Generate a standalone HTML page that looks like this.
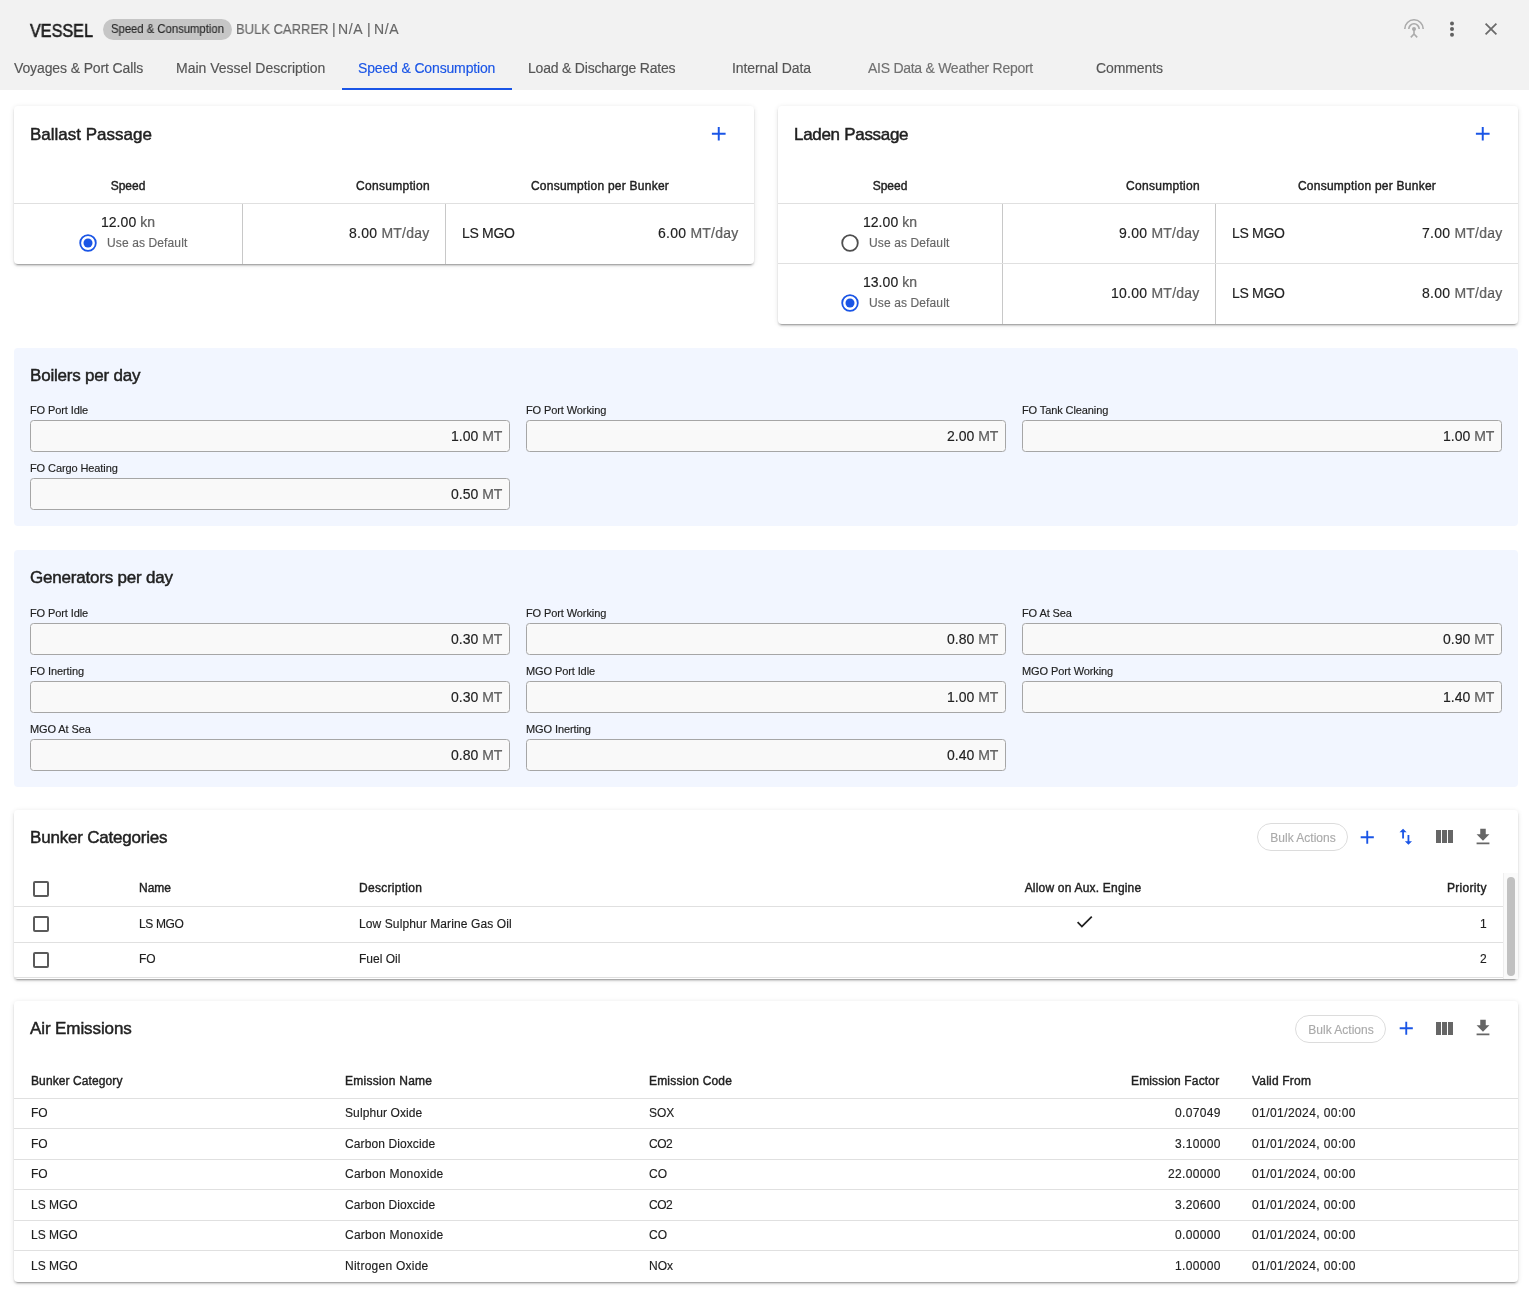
<!DOCTYPE html>
<html><head><meta charset="utf-8">
<style>
*{box-sizing:border-box;margin:0;padding:0}
html,body{width:1529px;height:1313px;overflow:hidden;background:#fff;font-family:"Liberation Sans",sans-serif;color:#212121}
.a{position:absolute;white-space:nowrap}
body>div.a{will-change:transform}
svg.a{display:block}
</style></head><body>
<div class="a" style="left:0px;top:0px;width:1529px;height:90px;background:#f2f2f2"></div>
<div class="a" style="top:21.09px;font-size:18.5px;line-height:20px;color:#1c1c1c;-webkit-text-stroke:0.6px #1c1c1c;left:30px;transform:scaleX(0.875);transform-origin:0 0;">VESSEL</div>
<div class="a" style="left:103px;top:19px;width:129px;height:21px;border-radius:11px;background:#c6c6c6"></div>
<div class="a" style="top:19.14px;font-size:12px;line-height:20px;color:#2a2a2a;-webkit-text-stroke:0.15px #2a2a2a;left:110.8px;transform:scaleX(0.94);transform-origin:0 0;">Speed &amp; Consumption</div>
<div class="a" style="top:19.25px;font-size:14px;line-height:20px;color:#666666;-webkit-text-stroke:0.15px #666666;left:331.8px;">|</div>
<div class="a" style="top:19.25px;font-size:14px;line-height:20px;color:#666666;letter-spacing:0.6px;-webkit-text-stroke:0.15px #666666;left:338.3px;">N/A</div>
<div class="a" style="top:19.25px;font-size:14px;line-height:20px;color:#666666;-webkit-text-stroke:0.15px #666666;left:366.9px;">|</div>
<div class="a" style="top:19.25px;font-size:14px;line-height:20px;color:#666666;letter-spacing:0.6px;-webkit-text-stroke:0.15px #666666;left:373.9px;">N/A</div>
<div class="a" style="top:19.25px;font-size:14px;line-height:20px;color:#666666;-webkit-text-stroke:0.15px #666666;left:236.4px;transform:scaleX(0.928);transform-origin:0 0;">BULK CARRER</div>
<svg class="a" style="left:1400px;top:14px" width="28" height="26" viewBox="0 0 28 26">
<path d="M4.8 15 A9.2 9.2 0 0 1 23.2 15" fill="none" stroke="#ababab" stroke-width="1.6"/>
<path d="M8.8 15 A5.2 5.2 0 0 1 19.2 15" fill="none" stroke="#ababab" stroke-width="1.6"/>
<circle cx="14" cy="15" r="2" fill="#ababab"/>
<path d="M14 16 V21 M14 20 L10.8 23.4 M14 20 L17.2 23.4" stroke="#ababab" stroke-width="1.6" fill="none"/>
</svg>
<svg class="a" style="left:1449px;top:21px" width="6" height="16" viewBox="0 0 6 16">
<circle cx="3" cy="2.5" r="2" fill="#616161"/><circle cx="3" cy="8" r="2" fill="#616161"/><circle cx="3" cy="13.7" r="2" fill="#616161"/></svg>
<svg class="a" style="left:1484px;top:22px" width="14" height="14" viewBox="0 0 14 14">
<path d="M1.6 1.6 L12.4 12.4 M12.4 1.6 L1.6 12.4" stroke="#6b6b6b" stroke-width="1.8"/></svg>
<div class="a" style="top:58.05px;font-size:14px;line-height:20px;color:#555555;letter-spacing:-0.12px;-webkit-text-stroke:0.15px #555555;left:14px;">Voyages &amp; Port Calls</div>
<div class="a" style="top:58.05px;font-size:14px;line-height:20px;color:#555555;-webkit-text-stroke:0.15px #555555;left:176px;">Main Vessel Description</div>
<div class="a" style="top:58.05px;font-size:14px;line-height:20px;color:#1a55e6;letter-spacing:-0.15px;-webkit-text-stroke:0.15px #1a55e6;left:358px;">Speed &amp; Consumption</div>
<div class="a" style="top:58.05px;font-size:14px;line-height:20px;color:#555555;letter-spacing:-0.2px;-webkit-text-stroke:0.15px #555555;left:528px;">Load &amp; Discharge Rates</div>
<div class="a" style="top:58.05px;font-size:14px;line-height:20px;color:#555555;letter-spacing:-0.1px;-webkit-text-stroke:0.15px #555555;left:732px;">Internal Data</div>
<div class="a" style="top:58.05px;font-size:14px;line-height:20px;color:#707070;letter-spacing:-0.27px;-webkit-text-stroke:0.15px #707070;left:868px;">AIS Data &amp; Weather Report</div>
<div class="a" style="top:58.05px;font-size:14px;line-height:20px;color:#555555;letter-spacing:-0.1px;-webkit-text-stroke:0.15px #555555;left:1096px;">Comments</div>
<div class="a" style="left:342px;top:88px;width:170px;height:2px;background:#1a55e6"></div>
<div class="a" style="left:14px;top:106px;width:740px;height:158px;box-shadow:0 3px 1px -2px rgba(0,0,0,.2),0 2px 2px 0 rgba(0,0,0,.14),0 1px 5px 0 rgba(0,0,0,.12);border-radius:4px;background:#fff;"></div>
<div class="a" style="top:125.21px;font-size:17px;line-height:20px;color:#212121;-webkit-text-stroke:0.45px #212121;left:30px;">Ballast Passage</div>
<svg class="a" style="left:707.25px;top:122.25px" width="23.5" height="23.5" viewBox="0 0 24 24"><path d="M19 13h-6v6h-2v-6H5v-2h6V5h2v6h6v2z" fill="#1a55e6"/></svg>
<div class="a" style="top:175.74px;font-size:12px;line-height:20px;color:#212121;-webkit-text-stroke:0.4px #212121;left:-272.0px;width:800px;text-align:center;">Speed</div>
<div class="a" style="top:175.74px;font-size:12px;line-height:20px;color:#212121;letter-spacing:0.3px;-webkit-text-stroke:0.4px #212121;right:1098.5px;">Consumption</div>
<div class="a" style="top:175.74px;font-size:12px;line-height:20px;color:#212121;letter-spacing:0.25px;-webkit-text-stroke:0.4px #212121;left:199.5px;width:800px;text-align:center;">Consumption per Bunker</div>
<div class="a" style="left:14px;top:203px;width:740px;height:1px;background:#e0e0e0"></div>
<div class="a" style="left:242px;top:204px;width:1px;height:60px;background:#c8c8c8"></div>
<div class="a" style="left:445px;top:204px;width:1px;height:60px;background:#c8c8c8"></div>
<div class="a" style="top:212.25px;font-size:14px;line-height:20px;color:#212121;letter-spacing:0.05px;-webkit-text-stroke:0.15px #212121;left:-272.5px;width:800px;text-align:center;">12.00 <span style="color:#666666">kn</span></div>
<svg class="a" style="left:77.7px;top:233.1px" width="20" height="20" viewBox="0 0 20 20"><circle cx="10" cy="10" r="7.8" fill="none" stroke="#1a55e6" stroke-width="1.8"/><circle cx="10" cy="10" r="4.5" fill="#1a55e6"/></svg>
<div class="a" style="top:232.94px;font-size:12px;line-height:20px;color:#666666;letter-spacing:0.12px;-webkit-text-stroke:0.15px #666666;left:107.4px;">Use as Default</div>
<div class="a" style="top:223.15px;font-size:14px;line-height:20px;color:#212121;letter-spacing:0.25px;-webkit-text-stroke:0.15px #212121;right:1099.5px;">8.00 <span style="color:#666666">MT/day</span></div>
<div class="a" style="top:223.15px;font-size:14px;line-height:20px;color:#212121;letter-spacing:-0.3px;-webkit-text-stroke:0.15px #212121;left:462px;">LS MGO</div>
<div class="a" style="top:223.15px;font-size:14px;line-height:20px;color:#212121;letter-spacing:0.25px;-webkit-text-stroke:0.15px #212121;right:790px;">6.00 <span style="color:#666666">MT/day</span></div>
<div class="a" style="left:778px;top:106px;width:740px;height:218px;box-shadow:0 3px 1px -2px rgba(0,0,0,.2),0 2px 2px 0 rgba(0,0,0,.14),0 1px 5px 0 rgba(0,0,0,.12);border-radius:4px;background:#fff;"></div>
<div class="a" style="top:125.21px;font-size:17px;line-height:20px;color:#212121;letter-spacing:-0.3px;-webkit-text-stroke:0.45px #212121;left:794px;">Laden Passage</div>
<svg class="a" style="left:1471.25px;top:122.25px" width="23.5" height="23.5" viewBox="0 0 24 24"><path d="M19 13h-6v6h-2v-6H5v-2h6V5h2v6h6v2z" fill="#1a55e6"/></svg>
<div class="a" style="top:175.74px;font-size:12px;line-height:20px;color:#212121;-webkit-text-stroke:0.4px #212121;left:490.0px;width:800px;text-align:center;">Speed</div>
<div class="a" style="top:175.74px;font-size:12px;line-height:20px;color:#212121;letter-spacing:0.3px;-webkit-text-stroke:0.4px #212121;right:328.5px;">Consumption</div>
<div class="a" style="top:175.74px;font-size:12px;line-height:20px;color:#212121;letter-spacing:0.25px;-webkit-text-stroke:0.4px #212121;left:966.5px;width:800px;text-align:center;">Consumption per Bunker</div>
<div class="a" style="left:778px;top:203px;width:740px;height:1px;background:#e0e0e0"></div>
<div class="a" style="left:1002px;top:204px;width:1px;height:60px;background:#c8c8c8"></div>
<div class="a" style="left:1215px;top:204px;width:1px;height:60px;background:#c8c8c8"></div>
<div class="a" style="top:212.25px;font-size:14px;line-height:20px;color:#212121;letter-spacing:0.05px;-webkit-text-stroke:0.15px #212121;left:489.5px;width:800px;text-align:center;">12.00 <span style="color:#666666">kn</span></div>
<svg class="a" style="left:839.7px;top:233.1px" width="20" height="20" viewBox="0 0 20 20"><circle cx="10" cy="10" r="7.8" fill="none" stroke="#4e4e4e" stroke-width="1.8"/></svg>
<div class="a" style="top:232.94px;font-size:12px;line-height:20px;color:#666666;letter-spacing:0.12px;-webkit-text-stroke:0.15px #666666;left:869.4px;">Use as Default</div>
<div class="a" style="top:223.15px;font-size:14px;line-height:20px;color:#212121;letter-spacing:0.25px;-webkit-text-stroke:0.15px #212121;right:329.5px;">9.00 <span style="color:#666666">MT/day</span></div>
<div class="a" style="top:223.15px;font-size:14px;line-height:20px;color:#212121;letter-spacing:-0.3px;-webkit-text-stroke:0.15px #212121;left:1232px;">LS MGO</div>
<div class="a" style="top:223.15px;font-size:14px;line-height:20px;color:#212121;letter-spacing:0.25px;-webkit-text-stroke:0.15px #212121;right:26px;">7.00 <span style="color:#666666">MT/day</span></div>
<div class="a" style="left:778px;top:263px;width:740px;height:1px;background:#e0e0e0"></div>
<div class="a" style="left:1002px;top:264px;width:1px;height:60px;background:#c8c8c8"></div>
<div class="a" style="left:1215px;top:264px;width:1px;height:60px;background:#c8c8c8"></div>
<div class="a" style="top:272.25px;font-size:14px;line-height:20px;color:#212121;letter-spacing:0.05px;-webkit-text-stroke:0.15px #212121;left:489.5px;width:800px;text-align:center;">13.00 <span style="color:#666666">kn</span></div>
<svg class="a" style="left:839.7px;top:293.1px" width="20" height="20" viewBox="0 0 20 20"><circle cx="10" cy="10" r="7.8" fill="none" stroke="#1a55e6" stroke-width="1.8"/><circle cx="10" cy="10" r="4.5" fill="#1a55e6"/></svg>
<div class="a" style="top:292.94px;font-size:12px;line-height:20px;color:#666666;letter-spacing:0.12px;-webkit-text-stroke:0.15px #666666;left:869.4px;">Use as Default</div>
<div class="a" style="top:283.15px;font-size:14px;line-height:20px;color:#212121;letter-spacing:0.25px;-webkit-text-stroke:0.15px #212121;right:329.5px;">10.00 <span style="color:#666666">MT/day</span></div>
<div class="a" style="top:283.15px;font-size:14px;line-height:20px;color:#212121;letter-spacing:-0.3px;-webkit-text-stroke:0.15px #212121;left:1232px;">LS MGO</div>
<div class="a" style="top:283.15px;font-size:14px;line-height:20px;color:#212121;letter-spacing:0.25px;-webkit-text-stroke:0.15px #212121;right:26px;">8.00 <span style="color:#666666">MT/day</span></div>
<div class="a" style="left:14px;top:348px;width:1504px;height:178px;background:#f2f6ff;border-radius:4px"></div>
<div class="a" style="top:365.91px;font-size:17px;line-height:20px;color:#212121;letter-spacing:-0.2px;-webkit-text-stroke:0.45px #212121;left:30px;">Boilers per day</div>
<div class="a" style="top:399.69px;font-size:11px;line-height:20px;color:#212121;letter-spacing:-0.1px;-webkit-text-stroke:0.15px #212121;left:30px;">FO Port Idle</div>
<div class="a" style="left:30px;top:420px;width:480px;height:32px;border:1px solid #a6a6a6;border-radius:3.5px;background:#f9f9f9;box-sizing:border-box"></div>
<div class="a" style="top:425.85px;font-size:14px;line-height:20px;color:#212121;-webkit-text-stroke:0.15px #212121;right:1027px;">1.00 <span style="color:#666666">MT</span></div>
<div class="a" style="top:399.69px;font-size:11px;line-height:20px;color:#212121;letter-spacing:-0.1px;-webkit-text-stroke:0.15px #212121;left:526px;">FO Port Working</div>
<div class="a" style="left:526px;top:420px;width:480px;height:32px;border:1px solid #a6a6a6;border-radius:3.5px;background:#f9f9f9;box-sizing:border-box"></div>
<div class="a" style="top:425.85px;font-size:14px;line-height:20px;color:#212121;-webkit-text-stroke:0.15px #212121;right:531px;">2.00 <span style="color:#666666">MT</span></div>
<div class="a" style="top:399.69px;font-size:11px;line-height:20px;color:#212121;letter-spacing:-0.1px;-webkit-text-stroke:0.15px #212121;left:1022px;">FO Tank Cleaning</div>
<div class="a" style="left:1022px;top:420px;width:480px;height:32px;border:1px solid #a6a6a6;border-radius:3.5px;background:#f9f9f9;box-sizing:border-box"></div>
<div class="a" style="top:425.85px;font-size:14px;line-height:20px;color:#212121;-webkit-text-stroke:0.15px #212121;right:35px;">1.00 <span style="color:#666666">MT</span></div>
<div class="a" style="top:457.69px;font-size:11px;line-height:20px;color:#212121;letter-spacing:-0.1px;-webkit-text-stroke:0.15px #212121;left:30px;">FO Cargo Heating</div>
<div class="a" style="left:30px;top:478px;width:480px;height:32px;border:1px solid #a6a6a6;border-radius:3.5px;background:#f9f9f9;box-sizing:border-box"></div>
<div class="a" style="top:483.85px;font-size:14px;line-height:20px;color:#212121;-webkit-text-stroke:0.15px #212121;right:1027px;">0.50 <span style="color:#666666">MT</span></div>
<div class="a" style="left:14px;top:550px;width:1504px;height:237px;background:#f2f6ff;border-radius:4px"></div>
<div class="a" style="top:567.81px;font-size:17px;line-height:20px;color:#212121;letter-spacing:-0.2px;-webkit-text-stroke:0.45px #212121;left:30px;">Generators per day</div>
<div class="a" style="top:602.69px;font-size:11px;line-height:20px;color:#212121;letter-spacing:-0.1px;-webkit-text-stroke:0.15px #212121;left:30px;">FO Port Idle</div>
<div class="a" style="left:30px;top:623px;width:480px;height:32px;border:1px solid #a6a6a6;border-radius:3.5px;background:#f9f9f9;box-sizing:border-box"></div>
<div class="a" style="top:628.85px;font-size:14px;line-height:20px;color:#212121;-webkit-text-stroke:0.15px #212121;right:1027px;">0.30 <span style="color:#666666">MT</span></div>
<div class="a" style="top:602.69px;font-size:11px;line-height:20px;color:#212121;letter-spacing:-0.1px;-webkit-text-stroke:0.15px #212121;left:526px;">FO Port Working</div>
<div class="a" style="left:526px;top:623px;width:480px;height:32px;border:1px solid #a6a6a6;border-radius:3.5px;background:#f9f9f9;box-sizing:border-box"></div>
<div class="a" style="top:628.85px;font-size:14px;line-height:20px;color:#212121;-webkit-text-stroke:0.15px #212121;right:531px;">0.80 <span style="color:#666666">MT</span></div>
<div class="a" style="top:602.69px;font-size:11px;line-height:20px;color:#212121;letter-spacing:-0.1px;-webkit-text-stroke:0.15px #212121;left:1022px;">FO At Sea</div>
<div class="a" style="left:1022px;top:623px;width:480px;height:32px;border:1px solid #a6a6a6;border-radius:3.5px;background:#f9f9f9;box-sizing:border-box"></div>
<div class="a" style="top:628.85px;font-size:14px;line-height:20px;color:#212121;-webkit-text-stroke:0.15px #212121;right:35px;">0.90 <span style="color:#666666">MT</span></div>
<div class="a" style="top:660.69px;font-size:11px;line-height:20px;color:#212121;letter-spacing:-0.1px;-webkit-text-stroke:0.15px #212121;left:30px;">FO Inerting</div>
<div class="a" style="left:30px;top:681px;width:480px;height:32px;border:1px solid #a6a6a6;border-radius:3.5px;background:#f9f9f9;box-sizing:border-box"></div>
<div class="a" style="top:686.85px;font-size:14px;line-height:20px;color:#212121;-webkit-text-stroke:0.15px #212121;right:1027px;">0.30 <span style="color:#666666">MT</span></div>
<div class="a" style="top:660.69px;font-size:11px;line-height:20px;color:#212121;letter-spacing:-0.1px;-webkit-text-stroke:0.15px #212121;left:526px;">MGO Port Idle</div>
<div class="a" style="left:526px;top:681px;width:480px;height:32px;border:1px solid #a6a6a6;border-radius:3.5px;background:#f9f9f9;box-sizing:border-box"></div>
<div class="a" style="top:686.85px;font-size:14px;line-height:20px;color:#212121;-webkit-text-stroke:0.15px #212121;right:531px;">1.00 <span style="color:#666666">MT</span></div>
<div class="a" style="top:660.69px;font-size:11px;line-height:20px;color:#212121;letter-spacing:-0.1px;-webkit-text-stroke:0.15px #212121;left:1022px;">MGO Port Working</div>
<div class="a" style="left:1022px;top:681px;width:480px;height:32px;border:1px solid #a6a6a6;border-radius:3.5px;background:#f9f9f9;box-sizing:border-box"></div>
<div class="a" style="top:686.85px;font-size:14px;line-height:20px;color:#212121;-webkit-text-stroke:0.15px #212121;right:35px;">1.40 <span style="color:#666666">MT</span></div>
<div class="a" style="top:718.69px;font-size:11px;line-height:20px;color:#212121;letter-spacing:-0.1px;-webkit-text-stroke:0.15px #212121;left:30px;">MGO At Sea</div>
<div class="a" style="left:30px;top:739px;width:480px;height:32px;border:1px solid #a6a6a6;border-radius:3.5px;background:#f9f9f9;box-sizing:border-box"></div>
<div class="a" style="top:744.85px;font-size:14px;line-height:20px;color:#212121;-webkit-text-stroke:0.15px #212121;right:1027px;">0.80 <span style="color:#666666">MT</span></div>
<div class="a" style="top:718.69px;font-size:11px;line-height:20px;color:#212121;letter-spacing:-0.1px;-webkit-text-stroke:0.15px #212121;left:526px;">MGO Inerting</div>
<div class="a" style="left:526px;top:739px;width:480px;height:32px;border:1px solid #a6a6a6;border-radius:3.5px;background:#f9f9f9;box-sizing:border-box"></div>
<div class="a" style="top:744.85px;font-size:14px;line-height:20px;color:#212121;-webkit-text-stroke:0.15px #212121;right:531px;">0.40 <span style="color:#666666">MT</span></div>
<div class="a" style="left:14px;top:810px;width:1504px;height:169px;box-shadow:0 3px 1px -2px rgba(0,0,0,.2),0 2px 2px 0 rgba(0,0,0,.14),0 1px 5px 0 rgba(0,0,0,.12);border-radius:4px;background:#fff;"></div>
<div class="a" style="top:827.71px;font-size:17px;line-height:20px;color:#212121;letter-spacing:-0.2px;-webkit-text-stroke:0.45px #212121;left:30px;">Bunker Categories</div>
<div class="a" style="left:1257px;top:823px;width:91px;height:28px;border:1px solid #dcdcdc;border-radius:14px;box-sizing:border-box"></div>
<div class="a" style="top:827.74px;font-size:12px;line-height:20px;color:#aaaaaa;-webkit-text-stroke:0.15px #aaaaaa;left:902.5px;width:800px;text-align:center;">Bulk Actions</div>
<svg class="a" style="left:1355.75px;top:825.75px" width="22.5" height="22.5" viewBox="0 0 24 24"><path d="M19 13h-6v6h-2v-6H5v-2h6V5h2v6h6v2z" fill="#1a55e6"/></svg>
<svg class="a" style="left:1395.25px;top:826.25px" width="21.5" height="21.5" viewBox="0 0 24 24"><path d="M16 17.01V10h-2v7.01h-3L15 21l4-3.99h-3zM9 3L5 6.99h3V14h2V6.99h3L9 3z" fill="#1a55e6"/></svg>
<svg class="a" style="left:1432.0px;top:825.0px" width="24" height="24" viewBox="0 0 24 24"><path d="M10 18h5V5h-5v13zm-6 0h5V5H4v13zM16 5v13h5V5h-5z" fill="#666666"/></svg>
<svg class="a" style="left:1472.0px;top:826.0px" width="22" height="22" viewBox="0 0 24 24"><path d="M19 9h-4V3H9v6H5l7 7 7-7zM5 18v2h14v-2H5z" fill="#666666"/></svg>
<div class="a" style="left:33px;top:881px;width:16px;height:16px;border:2px solid #5a5a5a;border-radius:2px;box-sizing:border-box"></div>
<div class="a" style="top:877.84px;font-size:12px;line-height:20px;color:#212121;-webkit-text-stroke:0.4px #212121;left:139.2px;">Name</div>
<div class="a" style="top:877.84px;font-size:12px;line-height:20px;color:#212121;letter-spacing:0.28px;-webkit-text-stroke:0.4px #212121;left:359px;">Description</div>
<div class="a" style="top:877.84px;font-size:12px;line-height:20px;color:#212121;letter-spacing:0.2px;-webkit-text-stroke:0.4px #212121;left:683px;width:800px;text-align:center;">Allow on Aux. Engine</div>
<div class="a" style="top:877.84px;font-size:12px;line-height:20px;color:#212121;letter-spacing:0.3px;-webkit-text-stroke:0.4px #212121;right:41.799999999999955px;">Priority</div>
<div class="a" style="left:14px;top:906px;width:1489px;height:1px;background:#e0e0e0"></div>
<div class="a" style="left:33px;top:916px;width:16px;height:16px;border:2px solid #5a5a5a;border-radius:2px;box-sizing:border-box"></div>
<div class="a" style="top:913.74px;font-size:12px;line-height:20px;color:#212121;letter-spacing:-0.35px;-webkit-text-stroke:0.15px #212121;left:139.2px;">LS MGO</div>
<div class="a" style="top:913.74px;font-size:12px;line-height:20px;color:#212121;letter-spacing:0.1px;-webkit-text-stroke:0.15px #212121;left:358.5px;">Low Sulphur Marine Gas Oil</div>
<svg class="a" style="left:1073.5px;top:911.0px" width="21" height="21" viewBox="0 0 24 24"><path d="M9 16.17L4.83 12l-1.42 1.41L9 19 21 7l-1.41-1.41z" fill="#212121"/></svg>
<div class="a" style="top:913.74px;font-size:12px;line-height:20px;color:#212121;-webkit-text-stroke:0.15px #212121;right:42.5px;">1</div>
<div class="a" style="left:14px;top:942px;width:1489px;height:1px;background:#e0e0e0"></div>
<div class="a" style="left:33px;top:952px;width:16px;height:16px;border:2px solid #5a5a5a;border-radius:2px;box-sizing:border-box"></div>
<div class="a" style="top:948.74px;font-size:12px;line-height:20px;color:#212121;-webkit-text-stroke:0.15px #212121;left:139.2px;">FO</div>
<div class="a" style="top:948.74px;font-size:12px;line-height:20px;color:#212121;-webkit-text-stroke:0.15px #212121;left:358.5px;">Fuel Oil</div>
<div class="a" style="top:948.74px;font-size:12px;line-height:20px;color:#212121;-webkit-text-stroke:0.15px #212121;right:42.5px;">2</div>
<div class="a" style="left:14px;top:977px;width:1489px;height:1px;background:#e0e0e0"></div>
<div class="a" style="left:1503px;top:873px;width:15px;height:106px;background:#fafafa;border-left:1px solid #eeeeee;box-sizing:border-box"></div>
<div class="a" style="left:1507px;top:877px;width:8px;height:99px;background:#c1c1c1;border-radius:4px"></div>
<div class="a" style="left:14px;top:1001px;width:1504px;height:281px;box-shadow:0 3px 1px -2px rgba(0,0,0,.2),0 2px 2px 0 rgba(0,0,0,.14),0 1px 5px 0 rgba(0,0,0,.12);border-radius:4px;background:#fff;"></div>
<div class="a" style="top:1019.21px;font-size:17px;line-height:20px;color:#212121;letter-spacing:-0.1px;-webkit-text-stroke:0.45px #212121;left:30px;">Air Emissions</div>
<div class="a" style="left:1295px;top:1015px;width:91px;height:28px;border:1px solid #dcdcdc;border-radius:14px;box-sizing:border-box"></div>
<div class="a" style="top:1019.74px;font-size:12px;line-height:20px;color:#aaaaaa;-webkit-text-stroke:0.15px #aaaaaa;left:940.5px;width:800px;text-align:center;">Bulk Actions</div>
<svg class="a" style="left:1394.75px;top:1016.95px" width="22.5" height="22.5" viewBox="0 0 24 24"><path d="M19 13h-6v6h-2v-6H5v-2h6V5h2v6h6v2z" fill="#1a55e6"/></svg>
<svg class="a" style="left:1432.0px;top:1016.5px" width="24" height="24" viewBox="0 0 24 24"><path d="M10 18h5V5h-5v13zm-6 0h5V5H4v13zM16 5v13h5V5h-5z" fill="#666666"/></svg>
<svg class="a" style="left:1472.0px;top:1017.0px" width="22" height="22" viewBox="0 0 24 24"><path d="M19 9h-4V3H9v6H5l7 7 7-7zM5 18v2h14v-2H5z" fill="#666666"/></svg>
<div class="a" style="top:1070.64px;font-size:12px;line-height:20px;color:#212121;letter-spacing:0.1px;-webkit-text-stroke:0.4px #212121;left:30.5px;">Bunker Category</div>
<div class="a" style="top:1070.64px;font-size:12px;line-height:20px;color:#212121;letter-spacing:0.25px;-webkit-text-stroke:0.4px #212121;left:345.4px;">Emission Name</div>
<div class="a" style="top:1070.64px;font-size:12px;line-height:20px;color:#212121;letter-spacing:0.18px;-webkit-text-stroke:0.4px #212121;left:648.6px;">Emission Code</div>
<div class="a" style="top:1070.64px;font-size:12px;line-height:20px;color:#212121;letter-spacing:0.15px;-webkit-text-stroke:0.4px #212121;right:309.5px;">Emission Factor</div>
<div class="a" style="top:1070.64px;font-size:12px;line-height:20px;color:#212121;letter-spacing:0.2px;-webkit-text-stroke:0.4px #212121;left:1252px;">Valid From</div>
<div class="a" style="left:14px;top:1098px;width:1504px;height:1px;background:#e0e0e0"></div>
<div class="a" style="top:1103.44px;font-size:12px;line-height:20px;color:#212121;-webkit-text-stroke:0.15px #212121;left:30.5px;">FO</div>
<div class="a" style="top:1103.44px;font-size:12px;line-height:20px;color:#212121;letter-spacing:0.1px;-webkit-text-stroke:0.15px #212121;left:345.4px;">Sulphur Oxide</div>
<div class="a" style="top:1103.44px;font-size:12px;line-height:20px;color:#212121;-webkit-text-stroke:0.15px #212121;left:648.6px;">SOX</div>
<div class="a" style="top:1103.44px;font-size:12px;line-height:20px;color:#212121;letter-spacing:0.35px;-webkit-text-stroke:0.15px #212121;right:308.5px;">0.07049</div>
<div class="a" style="top:1103.44px;font-size:12px;line-height:20px;color:#212121;letter-spacing:0.42px;-webkit-text-stroke:0.15px #212121;left:1252px;">01/01/2024, 00:00</div>
<div class="a" style="left:14px;top:1128px;width:1504px;height:1px;background:#e0e0e0"></div>
<div class="a" style="top:1133.94px;font-size:12px;line-height:20px;color:#212121;-webkit-text-stroke:0.15px #212121;left:30.5px;">FO</div>
<div class="a" style="top:1133.94px;font-size:12px;line-height:20px;color:#212121;letter-spacing:0.1px;-webkit-text-stroke:0.15px #212121;left:345.4px;">Carbon Dioxcide</div>
<div class="a" style="top:1133.94px;font-size:12px;line-height:20px;color:#212121;letter-spacing:-0.5px;-webkit-text-stroke:0.15px #212121;left:648.6px;">CO2</div>
<div class="a" style="top:1133.94px;font-size:12px;line-height:20px;color:#212121;letter-spacing:0.35px;-webkit-text-stroke:0.15px #212121;right:308.5px;">3.10000</div>
<div class="a" style="top:1133.94px;font-size:12px;line-height:20px;color:#212121;letter-spacing:0.42px;-webkit-text-stroke:0.15px #212121;left:1252px;">01/01/2024, 00:00</div>
<div class="a" style="left:14px;top:1159px;width:1504px;height:1px;background:#e0e0e0"></div>
<div class="a" style="top:1164.44px;font-size:12px;line-height:20px;color:#212121;-webkit-text-stroke:0.15px #212121;left:30.5px;">FO</div>
<div class="a" style="top:1164.44px;font-size:12px;line-height:20px;color:#212121;letter-spacing:0.25px;-webkit-text-stroke:0.15px #212121;left:345.4px;">Carbon Monoxide</div>
<div class="a" style="top:1164.44px;font-size:12px;line-height:20px;color:#212121;-webkit-text-stroke:0.15px #212121;left:648.6px;">CO</div>
<div class="a" style="top:1164.44px;font-size:12px;line-height:20px;color:#212121;letter-spacing:0.35px;-webkit-text-stroke:0.15px #212121;right:308.5px;">22.00000</div>
<div class="a" style="top:1164.44px;font-size:12px;line-height:20px;color:#212121;letter-spacing:0.42px;-webkit-text-stroke:0.15px #212121;left:1252px;">01/01/2024, 00:00</div>
<div class="a" style="left:14px;top:1189px;width:1504px;height:1px;background:#e0e0e0"></div>
<div class="a" style="top:1194.94px;font-size:12px;line-height:20px;color:#212121;-webkit-text-stroke:0.15px #212121;left:30.5px;">LS MGO</div>
<div class="a" style="top:1194.94px;font-size:12px;line-height:20px;color:#212121;letter-spacing:0.1px;-webkit-text-stroke:0.15px #212121;left:345.4px;">Carbon Dioxcide</div>
<div class="a" style="top:1194.94px;font-size:12px;line-height:20px;color:#212121;letter-spacing:-0.5px;-webkit-text-stroke:0.15px #212121;left:648.6px;">CO2</div>
<div class="a" style="top:1194.94px;font-size:12px;line-height:20px;color:#212121;letter-spacing:0.35px;-webkit-text-stroke:0.15px #212121;right:308.5px;">3.20600</div>
<div class="a" style="top:1194.94px;font-size:12px;line-height:20px;color:#212121;letter-spacing:0.42px;-webkit-text-stroke:0.15px #212121;left:1252px;">01/01/2024, 00:00</div>
<div class="a" style="left:14px;top:1220px;width:1504px;height:1px;background:#e0e0e0"></div>
<div class="a" style="top:1225.44px;font-size:12px;line-height:20px;color:#212121;-webkit-text-stroke:0.15px #212121;left:30.5px;">LS MGO</div>
<div class="a" style="top:1225.44px;font-size:12px;line-height:20px;color:#212121;letter-spacing:0.25px;-webkit-text-stroke:0.15px #212121;left:345.4px;">Carbon Monoxide</div>
<div class="a" style="top:1225.44px;font-size:12px;line-height:20px;color:#212121;-webkit-text-stroke:0.15px #212121;left:648.6px;">CO</div>
<div class="a" style="top:1225.44px;font-size:12px;line-height:20px;color:#212121;letter-spacing:0.35px;-webkit-text-stroke:0.15px #212121;right:308.5px;">0.00000</div>
<div class="a" style="top:1225.44px;font-size:12px;line-height:20px;color:#212121;letter-spacing:0.42px;-webkit-text-stroke:0.15px #212121;left:1252px;">01/01/2024, 00:00</div>
<div class="a" style="left:14px;top:1250px;width:1504px;height:1px;background:#e0e0e0"></div>
<div class="a" style="top:1255.94px;font-size:12px;line-height:20px;color:#212121;-webkit-text-stroke:0.15px #212121;left:30.5px;">LS MGO</div>
<div class="a" style="top:1255.94px;font-size:12px;line-height:20px;color:#212121;letter-spacing:0.25px;-webkit-text-stroke:0.15px #212121;left:345.4px;">Nitrogen Oxide</div>
<div class="a" style="top:1255.94px;font-size:12px;line-height:20px;color:#212121;-webkit-text-stroke:0.15px #212121;left:648.6px;">NOx</div>
<div class="a" style="top:1255.94px;font-size:12px;line-height:20px;color:#212121;letter-spacing:0.35px;-webkit-text-stroke:0.15px #212121;right:308.5px;">1.00000</div>
<div class="a" style="top:1255.94px;font-size:12px;line-height:20px;color:#212121;letter-spacing:0.42px;-webkit-text-stroke:0.15px #212121;left:1252px;">01/01/2024, 00:00</div>
</body></html>
